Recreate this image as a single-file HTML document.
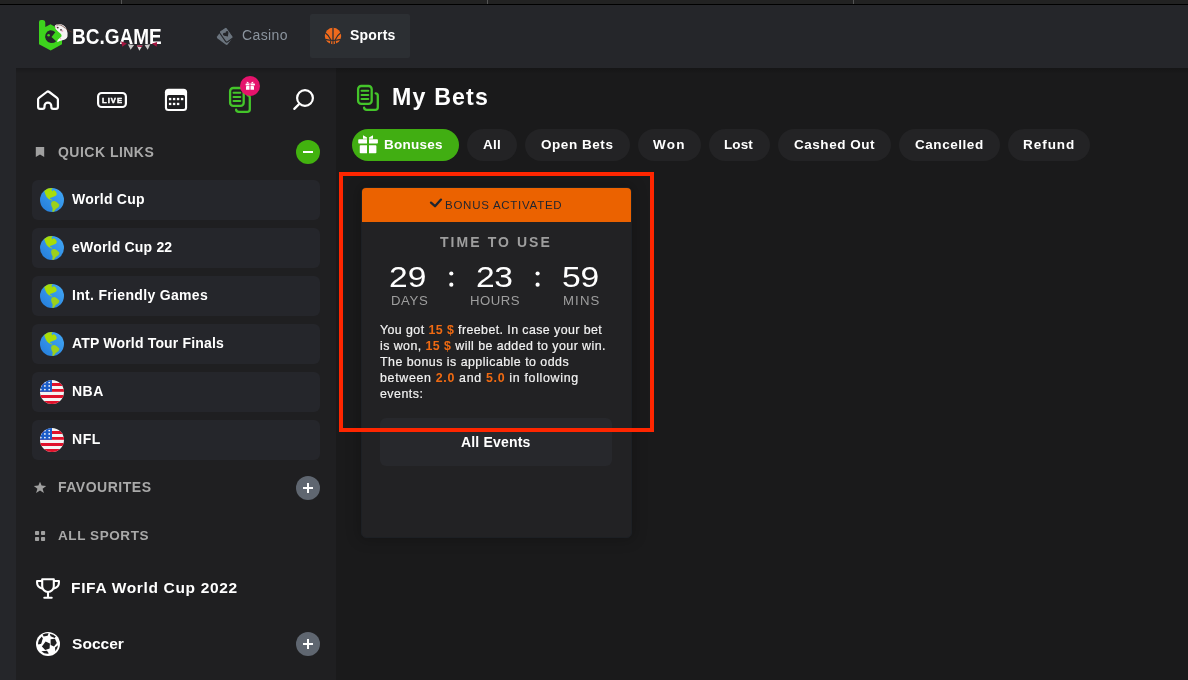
<!DOCTYPE html>
<html><head><meta charset="utf-8">
<style>
*{margin:0;padding:0;box-sizing:border-box}
html,body{width:1188px;height:680px;overflow:hidden;background:#25262a;font-family:"Liberation Sans",sans-serif;color:#fff}
.a{position:absolute}
.t{position:absolute;white-space:nowrap;line-height:1;will-change:transform}
#topstrip{left:0;top:0;width:1188px;height:4px;background:#222222}
#topline{left:0;top:4px;width:1188px;height:1px;background:#000}
.dv{top:0;width:1px;height:4px;background:#555}
#side{left:16px;top:68px;width:320px;height:612px;background:#1f1f21}
#main{left:336px;top:68px;width:852px;height:612px;background:#1a1a1b}
.ql{left:32px;width:288px;height:40px;background:#25262b;border-radius:6px}
.qlt{left:72px;font-size:13px;font-weight:bold;color:#fff}
.sh{left:58px;font-size:13px;font-weight:bold;color:#a9a9a9;letter-spacing:1.6px}
.chip{top:129px;height:32px;border-radius:16px;background:#232325;font-size:13px;font-weight:bold;color:#fff;text-align:center;line-height:32px;white-space:nowrap}
.or{color:#f06a12;font-weight:bold;-webkit-text-stroke:0}
#p1,#p2,#p3,#p4,#p5{-webkit-text-stroke:0.2px #f2f2f2}
</style></head><body>
<div class="a" id="topstrip"></div>
<div class="a dv" style="left:121px"></div>
<div class="a dv" style="left:487px"></div>
<div class="a dv" style="left:853px"></div>
<div class="a" id="topline"></div>

<!-- header tabs -->
<div class="a" style="left:310px;top:14px;width:100px;height:44px;background:#2c2f33;border-radius:2px"></div>
<div class="t" id="logo" style="left: 72px; top: 29px; font-size: 19px; font-weight: bold; letter-spacing: 0px; transform: scaleY(1.17); transform-origin: 0px 100%;">BC.GAME</div>
<div class="t" id="casino" style="left: 242px; top: 28px; font-size: 14px; color: rgb(139, 148, 158); letter-spacing: 0.4px;">Casino</div>
<div class="t" id="sports" style="left: 350px; top: 28px; font-size: 14px; font-weight: bold; letter-spacing: 0.2px;">Sports</div>

<div class="a" id="side"></div>
<div class="a" id="main"></div>
<div class="a" style="left:16px;top:68px;width:1172px;height:6px;background:linear-gradient(rgba(0,0,0,0.18),rgba(0,0,0,0))"></div>

<!-- sidebar -->
<div class="t sh" id="qlinks" style="top: 145px; font-size: 14px; letter-spacing: 0.48px; left: 58px;">QUICK LINKS</div>
<div class="a ql" style="top:180px"></div>
<div class="a ql" style="top:228px"></div>
<div class="a ql" style="top:276px"></div>
<div class="a ql" style="top:324px"></div>
<div class="a ql" style="top:372px"></div>
<div class="a ql" style="top:420px"></div>
<div class="t qlt" id="wc" style="top: 192px; font-size: 14px; letter-spacing: 0.26px; left: 72px;">World Cup</div>
<div class="t qlt" id="q1" style="top: 240px; font-size: 14px; letter-spacing: 0.2px; left: 72px;">eWorld Cup 22</div>
<div class="t qlt" id="q2" style="top: 288px; font-size: 14px; letter-spacing: 0.32px; left: 71.8px;">Int. Friendly Games</div>
<div class="t qlt" id="q3" style="top: 336px; font-size: 14px; letter-spacing: 0.18px; left: 72px;">ATP World Tour Finals</div>
<div class="t qlt" id="q4" style="top: 384px; font-size: 14px; letter-spacing: 0.5px; left: 71.6px;">NBA</div>
<div class="t qlt" id="q5" style="top: 432px; font-size: 14px; letter-spacing: 0.55px; left: 71.6px;">NFL</div>
<div class="t sh" id="fav" style="top: 480px; font-size: 14px; letter-spacing: 0.51px; left: 58px;">FAVOURITES</div>
<div class="t sh" id="alls" style="top: 529px; font-size: 13.5px; letter-spacing: 0.58px; left: 58px;">ALL SPORTS</div>
<div class="t" id="fifa" style="left: 71px; top: 580px; font-size: 15.5px; font-weight: bold; letter-spacing: 0.67px;">FIFA World Cup 2022</div>
<div class="t" id="soccer" style="left: 72px; top: 636px; font-size: 15.5px; font-weight: bold; letter-spacing: 0.04px;">Soccer</div>

<!-- main -->
<div class="t" id="mybets" style="left: 392px; top: 86px; font-size: 23.2px; font-weight: bold; letter-spacing: 1.16px;">My Bets</div>
<div class="a chip" style="left:352px;width:107px;background:#41ae12"></div>
<div class="a chip" style="left:467px;width:50px"></div>
<div class="a chip" style="left:525px;width:105px"></div>
<div class="a chip" style="left:638px;width:63px"></div>
<div class="a chip" style="left:709px;width:61px"></div>
<div class="a chip" style="left:778px;width:113px"></div>
<div class="a chip" style="left:899px;width:101px"></div>
<div class="a chip" style="left:1008px;width:82px"></div>
<div class="t ct" id="bon" style="left: 384px; top: 138px; font-size: 13.5px; font-weight: bold; letter-spacing: 0.27px;">Bonuses</div>
<div class="t ct" id="c_all" style="left: 483px; top: 138px; font-size: 13.5px; font-weight: bold; letter-spacing: 0.25px;">All</div>
<div class="t ct" id="c_open" style="left: 541px; top: 138px; font-size: 13.5px; font-weight: bold; letter-spacing: 0.55px;">Open Bets</div>
<div class="t ct" id="c_won" style="left: 653px; top: 138px; font-size: 13.5px; font-weight: bold; letter-spacing: 1.2px;">Won</div>
<div class="t ct" id="c_lost" style="left: 724px; top: 138px; font-size: 13.5px; font-weight: bold; letter-spacing: 0.1px;">Lost</div>
<div class="t ct" id="c_cash" style="left: 794px; top: 138px; font-size: 13.5px; font-weight: bold; letter-spacing: 0.53px;">Cashed Out</div>
<div class="t ct" id="c_canc" style="left: 915px; top: 138px; font-size: 13.5px; font-weight: bold; letter-spacing: 0.55px;">Cancelled</div>
<div class="t ct" id="c_ref" style="left: 1023px; top: 138px; font-size: 13.5px; font-weight: bold; letter-spacing: 0.96px;">Refund</div>

<!-- card -->
<div class="a" style="left:361px;top:187px;width:271px;height:351px;background:#222224;border:1px solid #1d2024;border-radius:5px;overflow:hidden;box-shadow:0 0 14px 2px rgba(0,0,0,0.22)">
  <div class="a" style="left:0;top:0;width:269px;height:34px;background:#eb6200"></div>
</div>
<div class="t" id="bact" style="left: 445px; top: 200px; font-size: 11.5px; color: rgb(30, 37, 48); letter-spacing: 0.74px;">BONUS ACTIVATED</div>
<div class="t" id="ttu" style="left: 440px; top: 235px; font-size: 14px; font-weight: bold; color: rgb(158, 158, 158); letter-spacing: 2.06px;">TIME TO USE</div>
<div class="t" id="d29" style="left: 389px; top: 262px; font-size: 30px; letter-spacing: 0px; transform: scaleX(1.12); transform-origin: 0px 0px;">29</div>
<div class="t" id="d23" style="left: 476px; top: 262px; font-size: 30px; letter-spacing: -0.5px; transform: scaleX(1.12); transform-origin: 0px 0px;">23</div>
<div class="t" id="d59" style="left: 562px; top: 262px; font-size: 30px; letter-spacing: -0.2px; transform: scaleX(1.12); transform-origin: 0px 0px;">59</div>
<div class="t" id="days" style="left: 391px; top: 294px; font-size: 13.2px; color: rgb(158, 158, 158); letter-spacing: 0.6px;">DAYS</div>
<div class="t" id="hours" style="left: 470px; top: 294px; font-size: 13.2px; color: rgb(158, 158, 158); letter-spacing: 0.45px;">HOURS</div>
<div class="t" id="mins" style="left: 563px; top: 294px; font-size: 13.2px; color: rgb(158, 158, 158); letter-spacing: 1.13px;">MINS</div>
<div class="t" id="p1" style="left: 380px; top: 324px; font-size: 12.4px; color: #f2f2f2; letter-spacing: 0.42px;">You got <span class="or">15 $</span> freebet. In case your bet</div>
<div class="t" id="p2" style="left: 380px; top: 340px; font-size: 12.4px; color: #f2f2f2; letter-spacing: 0.44px;">is won, <span class="or">15 $</span> will be added to your win.</div>
<div class="t" id="p3" style="left: 380px; top: 356px; font-size: 12.4px; color: #f2f2f2; letter-spacing: 0.48px;">The bonus is applicable to odds</div>
<div class="t" id="p4" style="left: 380px; top: 372px; font-size: 12.4px; color: #f2f2f2; letter-spacing: 0.68px;">between <span class="or">2.0</span> and <span class="or">5.0</span> in following</div>
<div class="t" id="p5" style="left: 380px; top: 388px; font-size: 12.4px; color: #f2f2f2; letter-spacing: 0.48px;">events:</div>
<div class="a" style="left:380px;top:418px;width:232px;height:48px;background:#27282c;border-radius:6px"></div>
<div class="t" id="allev" style="left: 461px; top: 435px; font-size: 14px; font-weight: bold; letter-spacing: 0.18px;">All Events</div>

<svg class="a" style="left:0;top:0" width="1188" height="680" viewBox="0 0 1188 680">

  <!-- LOGO -->
  <path d="M39 22 Q39 20 41 20 L43 20 Q45.3 20 45.3 22.5 L45.3 27 L50.5 24.2 L62 30.8 L62 44.2 L50.7 50.6 L39 44.2 Z" fill="#3dd31d"/>
  <path d="M50 30.3 A6.5 6.5 0 1 0 56.2 41.2 L51.5 37 L55.3 32.2 A6.5 6.5 0 0 0 50 30.3 Z" fill="#25262a"/>
  <circle cx="48.6" cy="35.3" r="1.3" fill="#3dd31d"/>
  <path d="M54.7 26 Q55.5 24 59.6 24 Q64.5 24.3 66.5 29 Q68.2 33.5 67.5 36.5 Q66.5 39.8 62.5 40.2 Q59.5 40.5 57.2 42.2 Q56.8 40 59.5 38.3 Q62 37 61.6 35 Q61 33.5 58 31.5 Q55 29.5 54.7 26 Z" fill="#f6f3f3"/>
  <circle cx="55.9" cy="27.2" r="0.9" fill="#e9a6c6"/>
  <circle cx="62.3" cy="31" r="1" fill="#eeb0cc"/>
  <circle cx="57.8" cy="27.6" r="0.85" fill="#3a2626"/>
  <circle cx="61" cy="29.8" r="0.85" fill="#3a2626"/>
  <path d="M56.5 25.2 Q60.5 23.6 65.3 28.3" stroke="#5a3024" stroke-width="0.7" fill="none"/>
  <path d="M65.5 28.5 Q69 31.5 72.6 32.3" stroke="#6b3a2a" stroke-width="0.55" fill="none"/>
  <circle cx="60.6" cy="38.6" r="0.6" fill="#e6a0b8"/>
  <path d="M121.1 41.3 L126.9 43.5 L122.3 46.7 Z" fill="#a3153f"/>
  <path d="M127.9 44.2 L134.1 45 L130.6 49.8 Z" fill="#c9c9c9"/>
  <path d="M136.8 45.4 L142.6 45.6 L139.4 50.8 Z" fill="#dddddd"/>
  <path d="M136.8 45.4 L142.6 45.6 L141.8 46.9 L137.6 46.8 Z" fill="#a3153f"/>
  <path d="M144.6 45 L150.3 44.2 L147.7 49.8 Z" fill="#c9c9c9"/>
  <path d="M151.9 43.5 L157.1 42 L156.6 46.8 Z" fill="#a3153f"/>
  <!-- casino icon -->
  <rect x="-4.5" y="-6.6" width="9" height="13.2" rx="1.5" transform="translate(224.3 37.9) rotate(-53)" fill="#6b747e"/>
  <rect x="-4.5" y="-6.6" width="9" height="13.2" rx="1.5" transform="translate(226.3 34.6) rotate(-35)" fill="#6b747e" stroke="#25262a" stroke-width="1.1"/>
  <path d="M0 2.6 L-2.6 -0.2 Q-3.4 -1.4 -2.6 -2.3 Q-1.4 -3.2 0 -1.8 Q1.4 -3.2 2.6 -2.3 Q3.4 -1.4 2.6 -0.2 Z" fill="#25262a" transform="translate(226.4 34.4) rotate(-35)"/>
  <!-- basketball -->
  <circle cx="333" cy="36" r="8.2" fill="#ee6a1d"/>
  <g stroke="#2c2f33" fill="none">
    <path d="M333 27.6 V44.4" stroke-width="1.3"/>
    <path d="M324.6 32.3 Q328.6 35 330.9 40" stroke-width="1.1"/>
    <path d="M341.4 32.3 Q337.4 35 335.1 40" stroke-width="1.1"/>
    <path d="M325.2 39.4 Q333 41.6 340.8 39.4" stroke-width="1.1"/>
    <path d="M330.9 40.6 L330.2 44.5 M335.1 40.6 L335.8 44.5" stroke-width="1.1"/>
  </g>
  <!-- home -->
  <path d="M38.1 107 Q38.1 108.9 40 108.9 L42.6 108.9 Q44.5 108.9 44.5 107 L44.5 106 A3.4 3.4 0 0 1 51.3 106 L51.3 107 Q51.3 108.9 53.2 108.9 L56 108.9 Q57.9 108.9 57.9 107 L57.9 99.5 Q57.9 98.5 57 97.8 L49.3 92 Q48 91 46.7 92 L39 97.8 Q38.1 98.5 38.1 99.5 Z" fill="none" stroke="#fff" stroke-width="2.2" stroke-linejoin="round"/>
  <!-- live -->
  <rect x="98.1" y="93" width="27.8" height="14" rx="3.6" fill="none" stroke="#fff" stroke-width="2.2"/>
  <text x="101.9" y="102.8" font-family="Liberation Sans" font-weight="bold" font-size="7.6" fill="#fff" stroke="#fff" stroke-width="0.45" letter-spacing="1.1">LIVE</text>
  <!-- calendar -->
  <rect x="164.9" y="88.7" width="22.2" height="22.4" rx="3.6" fill="#fff"/>
  <rect x="167" y="95.1" width="18" height="13.9" rx="1.6" fill="#1f1f21"/>
  <g fill="#fff">
    <rect x="168.9" y="97.9" width="2.4" height="2.3"/><rect x="172.9" y="97.9" width="2.4" height="2.3"/><rect x="176.9" y="97.9" width="2.4" height="2.3"/><rect x="180.9" y="97.9" width="2.4" height="2.3"/>
    <rect x="168.9" y="102.8" width="2.4" height="2.3"/><rect x="172.9" y="102.8" width="2.4" height="2.3"/><rect x="176.9" y="102.8" width="2.4" height="2.3"/>
  </g>
  <!-- bets icon (sidebar) -->
  <g transform="translate(-128 2)" stroke="#44c52a" fill="none">
    <rect x="358.1" y="86" width="13.6" height="17.9" rx="3.2" stroke-width="2.3"/>
    <path d="M361.5 90.8 H368.3 M361.5 94.9 H368.3 M361.5 98.9 H368.3" stroke-width="2" stroke-linecap="round"/>
    <path d="M375.6 93.3 Q377.8 93.3 377.8 95.8 L377.8 107.2 Q377.8 109.85 375.2 109.85 L366.8 109.85 Q364.1 109.85 364.1 107.6" stroke-width="2.3" stroke-linecap="round"/>
  </g>
  <circle cx="250" cy="86" r="10" fill="#e5136c"/>
  <g fill="#fff">
    <rect x="245.6" y="83.6" width="9.3" height="1.9" rx="0.4"/>
    <rect x="246" y="86" width="8" height="3.8" rx="0.4"/>
    <path d="M246.8 81.4 L249.6 83.2 L246.8 83.2 Z M253.2 81.4 L250.4 83.2 L253.2 83.2 Z"/>
  </g>
  <rect x="249.5" y="83.4" width="1" height="6.6" fill="#e5136c"/>
  <!-- search -->
  <circle cx="305" cy="98" r="7.9" fill="none" stroke="#fff" stroke-width="2.2"/>
  <path d="M298.8 104.4 L294.3 108.9" stroke="#fff" stroke-width="2.2" stroke-linecap="round"/>
  <!-- bookmark -->
  <path d="M35.8 147 H44.2 V157.1 L40 154.5 L35.8 157.1 Z" fill="#a0a0a0"/>
  <!-- minus circle -->
  <circle cx="308" cy="152" r="12" fill="#42b20f"/>
  <rect x="303" y="151" width="10" height="2" fill="#fff"/>
  <!-- globes -->
  <defs>
    <linearGradient id="gg" x1="1" y1="0" x2="0" y2="1"><stop offset="0" stop-color="#43a9f7"/><stop offset="1" stop-color="#237bd9"/></linearGradient>
    <clipPath id="fc"><circle cx="12" cy="12" r="12"/></clipPath>
  </defs>
  <g transform="translate(40 188)">
      <circle cx="12" cy="12" r="12" fill="url(#gg)"/>
      <path d="M4.2 3.1 L7.8 0.5 L12.7 0 L11.5 1.6 L12.2 3.5 L13.6 2.1 L15.8 3.5 L16.9 5.9 L15.8 7.8 L12.2 9.2 L10.1 10.1 L10.1 11.1 L12.5 12 L11.5 12.5 L8.7 11.1 L6.8 9.2 L5.4 6.4 Z" fill="#a9dd07"/>
      <path d="M11.8 13.4 L14.8 12.9 L17.2 14.4 L19.5 16.7 L18.6 19.1 L15.8 20.9 L13.9 23.8 L12.2 23.8 L12.7 20.5 L11.5 18.1 L11.1 15.8 Z" fill="#9cd01c"/>
    </g>
  <g transform="translate(40 236)">
      <circle cx="12" cy="12" r="12" fill="url(#gg)"/>
      <path d="M4.2 3.1 L7.8 0.5 L12.7 0 L11.5 1.6 L12.2 3.5 L13.6 2.1 L15.8 3.5 L16.9 5.9 L15.8 7.8 L12.2 9.2 L10.1 10.1 L10.1 11.1 L12.5 12 L11.5 12.5 L8.7 11.1 L6.8 9.2 L5.4 6.4 Z" fill="#a9dd07"/>
      <path d="M11.8 13.4 L14.8 12.9 L17.2 14.4 L19.5 16.7 L18.6 19.1 L15.8 20.9 L13.9 23.8 L12.2 23.8 L12.7 20.5 L11.5 18.1 L11.1 15.8 Z" fill="#9cd01c"/>
    </g>
  <g transform="translate(40 284)">
      <circle cx="12" cy="12" r="12" fill="url(#gg)"/>
      <path d="M4.2 3.1 L7.8 0.5 L12.7 0 L11.5 1.6 L12.2 3.5 L13.6 2.1 L15.8 3.5 L16.9 5.9 L15.8 7.8 L12.2 9.2 L10.1 10.1 L10.1 11.1 L12.5 12 L11.5 12.5 L8.7 11.1 L6.8 9.2 L5.4 6.4 Z" fill="#a9dd07"/>
      <path d="M11.8 13.4 L14.8 12.9 L17.2 14.4 L19.5 16.7 L18.6 19.1 L15.8 20.9 L13.9 23.8 L12.2 23.8 L12.7 20.5 L11.5 18.1 L11.1 15.8 Z" fill="#9cd01c"/>
    </g>
  <g transform="translate(40 332)">
      <circle cx="12" cy="12" r="12" fill="url(#gg)"/>
      <path d="M4.2 3.1 L7.8 0.5 L12.7 0 L11.5 1.6 L12.2 3.5 L13.6 2.1 L15.8 3.5 L16.9 5.9 L15.8 7.8 L12.2 9.2 L10.1 10.1 L10.1 11.1 L12.5 12 L11.5 12.5 L8.7 11.1 L6.8 9.2 L5.4 6.4 Z" fill="#a9dd07"/>
      <path d="M11.8 13.4 L14.8 12.9 L17.2 14.4 L19.5 16.7 L18.6 19.1 L15.8 20.9 L13.9 23.8 L12.2 23.8 L12.7 20.5 L11.5 18.1 L11.1 15.8 Z" fill="#9cd01c"/>
    </g>
  <g transform="translate(40 380)">
      <g clip-path="url(#fc)">
        <rect x="0" y="0" width="24" height="24" fill="#f4f4f4"/>
        <rect x="0" y="3" width="24" height="3" fill="#e0112b"/>
        <rect x="0" y="9" width="24" height="2.8" fill="#e0112b"/>
        <rect x="0" y="15" width="24" height="3" fill="#e0112b"/>
        <rect x="0" y="21" width="24" height="3" fill="#e0112b"/>
        <rect x="0" y="0" width="12" height="11.8" fill="#1a5cc8"/>
        <g fill="#fff"><circle cx="4.9" cy="2.6" r="0.85"/><circle cx="9.2" cy="2.6" r="0.85"/><circle cx="4.9" cy="5.9" r="0.85"/><circle cx="9.2" cy="5.9" r="0.85"/><circle cx="0.8" cy="9.6" r="0.85"/><circle cx="4.9" cy="9.6" r="0.85"/><circle cx="9.2" cy="9.6" r="0.85"/><circle cx="0.9" cy="5.9" r="0.85"/></g>
      </g>
  </g>
  <g transform="translate(40 428)">
      <g clip-path="url(#fc)">
        <rect x="0" y="0" width="24" height="24" fill="#f4f4f4"/>
        <rect x="0" y="3" width="24" height="3" fill="#e0112b"/>
        <rect x="0" y="9" width="24" height="2.8" fill="#e0112b"/>
        <rect x="0" y="15" width="24" height="3" fill="#e0112b"/>
        <rect x="0" y="21" width="24" height="3" fill="#e0112b"/>
        <rect x="0" y="0" width="12" height="11.8" fill="#1a5cc8"/>
        <g fill="#fff"><circle cx="4.9" cy="2.6" r="0.85"/><circle cx="9.2" cy="2.6" r="0.85"/><circle cx="4.9" cy="5.9" r="0.85"/><circle cx="9.2" cy="5.9" r="0.85"/><circle cx="0.8" cy="9.6" r="0.85"/><circle cx="4.9" cy="9.6" r="0.85"/><circle cx="9.2" cy="9.6" r="0.85"/><circle cx="0.9" cy="5.9" r="0.85"/></g>
      </g>
  </g>
  <!-- star -->
  <path d="M40 481.8 L41.6 485.6 L46.2 485.9 L42.6 488.7 L43.9 493.1 L40 490.6 L36.1 493.1 L37.4 488.7 L33.8 485.9 L38.4 485.6 Z" fill="#a0a0a0"/>
  <!-- plus circles -->
  <circle cx="308" cy="488" r="12" fill="#5f6670"/>
  <path d="M303 488 H313 M308 483 V493" stroke="#fff" stroke-width="2"/>
  <circle cx="308" cy="644" r="12" fill="#5f6670"/>
  <path d="M303 644 H313 M308 639 V649" stroke="#fff" stroke-width="2"/>
  <!-- squares -->
  <g fill="#a0a0a0">
    <rect x="35" y="531" width="4.1" height="4" rx="0.8"/><rect x="41" y="531" width="4.1" height="4" rx="0.8"/>
    <rect x="35" y="537" width="4.1" height="4" rx="0.8"/><rect x="41" y="537" width="4.1" height="4" rx="0.8"/>
  </g>
  <!-- trophy -->
  <g stroke="#fff" stroke-width="2.1" fill="none" stroke-linejoin="round">
    <path d="M42.2 579.2 H53.8 V586.2 A5.8 5.8 0 0 1 42.2 586.2 Z"/>
    <path d="M42.2 581 H37.1 V582.8 Q37.1 587.2 42.2 588.4"/>
    <path d="M53.8 581 H58.9 V582.8 Q58.9 587.2 53.8 588.4"/>
    <path d="M48 592 V597.7 M44.3 597.7 H51.7" stroke-linecap="round"/>
  </g>
  <!-- soccer -->
  <circle cx="48" cy="644" r="12" fill="#fff"/>
  <g fill="#1f1f21">
    <path d="M45.6 641.6 L49.9 643.6 L49.6 648.4 L45.2 650 L41.9 646.4 Z"/>
    <path d="M50.6 639.2 L55 638.8 L56.8 643 L54 646.6 L50.6 645 Z"/>
    <path d="M38 643.2 Q38.2 639.8 41.8 636.6 L42.8 638.6 L41.2 643.8 L38.3 644.6 Z"/>
    <path d="M42.6 634.6 Q45.5 633.2 48.6 633.3 L47.6 635.8 L43.6 636.6 Z"/>
    <path d="M49.8 633.8 Q53.5 634.6 55.8 636.6 L54.6 637.9 L50.6 636.2 Z"/>
    <path d="M58 645.2 Q57.8 648.6 55.4 651.2 L55 647.4 Z"/>
    <path d="M41.4 651.2 L47 650.8 L48.8 653.6 Q44.6 654.2 41.4 651.2 Z"/>
  </g>
  <!-- my bets icon main -->
  <g stroke="#44c52a" fill="none">
    <rect x="358.1" y="86" width="13.6" height="17.9" rx="3.2" stroke-width="2.3"/>
    <path d="M361.5 90.8 H368.3 M361.5 94.9 H368.3 M361.5 98.9 H368.3" stroke-width="2" stroke-linecap="round"/>
    <path d="M375.6 93.3 Q377.8 93.3 377.8 95.8 L377.8 107.2 Q377.8 109.85 375.2 109.85 L366.8 109.85 Q364.1 109.85 364.1 107.6" stroke-width="2.3" stroke-linecap="round"/>
  </g>
  <!-- gift in chip -->
  <g fill="#fff">
    <rect x="358.25" y="139.25" width="19.65" height="4.25" rx="0.8"/>
    <rect x="359.75" y="145.25" width="16.65" height="8" rx="0.8"/>
    <path d="M363 135.2 L367 137.6 L367 138.8 L363 138.8 Z M373 135.2 L369 137.6 L369 138.8 L373 138.8 Z"/>
  </g>
  <rect x="367" y="135" width="2" height="19" fill="#41ae12"/>
  <!-- colons -->
  <g fill="#fff"><circle cx="451.3" cy="273.5" r="2.1"/><circle cx="451.3" cy="284.7" r="2.1"/><circle cx="537.6" cy="273.5" r="2.1"/><circle cx="537.6" cy="284.7" r="2.1"/></g>
  <!-- check -->
  <path d="M431 202.6 L435 206.2 L441 199.6" fill="none" stroke="#1e2530" stroke-width="2.3" stroke-linecap="round" stroke-linejoin="round"/>
  <!-- red highlight rect -->
  <rect x="341" y="174" width="311" height="256" fill="none" stroke="#ff2600" stroke-width="4"/>
</svg>
</body></html>
